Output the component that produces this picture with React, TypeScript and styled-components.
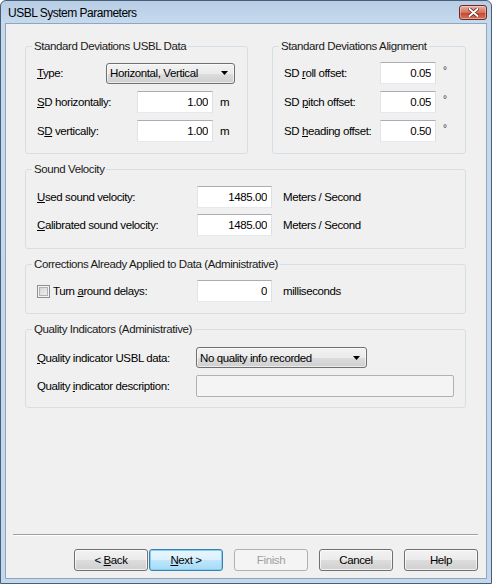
import React from "react";
import styled, { createGlobalStyle, css } from "styled-components";

const GlobalStyle = createGlobalStyle`
  html, body {
    margin: 0;
    padding: 0;
  }
  body {
    font-family: "Liberation Sans", Arial, sans-serif;
    font-size: 11.5px;
    letter-spacing: -0.4px;
    color: #000;
  }
  * {
    box-sizing: border-box;
  }
`;

const Window = styled.div`
  width: 492px;
  height: 584px;
  display: flex;
  flex-direction: column;
  padding: 0 4px 4px;
  border: 1px solid #4a5d72;
  border-radius: 6px 6px 0 0;
  background: linear-gradient(#b7cde6, #c6daee 22px, #c3d8ed);
`;

const TitleBar = styled.div`
  height: 22px;
  display: flex;
  align-items: flex-start;
  justify-content: space-between;
  padding-left: 3px;

  .caption {
    margin-top: 5px;
    font-size: 12px;
    letter-spacing: -0.5px;
    line-height: 14px;
  }
`;

const CloseBtn = styled.div`
  width: 28px;
  height: 15px;
  margin-top: 4px;
  display: flex;
  align-items: center;
  justify-content: center;
  border: 1px solid #6e2b22;
  border-radius: 3px;
  background: linear-gradient(#eab0a1, #d6715d 50%, #c4432c 51%, #d3775f);
  box-shadow: inset 0 0 0 1px rgba(255, 255, 255, 0.35);
`;

const Client = styled.div`
  flex: 1;
  display: flex;
  flex-direction: column;
  background: #f0f0f0;
  border: 1px solid #8fa6c0;
`;

const Content = styled.div`
  width: 441px;
  margin: 15px 0 0 19px;
  display: flex;
  flex-direction: column;
  gap: 8px;
`;

const TopRow = styled.div`
  display: grid;
  grid-template-columns: 223px 194px;
  justify-content: space-between;
`;

const GroupBox = styled.fieldset<{ $pt: number; $pb: number }>`
  margin: 0;
  min-width: 0;
  padding: ${(p) => p.$pt}px 8px ${(p) => p.$pb}px 11px;
  border: 1px solid #d5dfe5;
  border-radius: 3px;
  display: flex;
  flex-direction: column;

  > legend {
    margin-left: -5px;
    padding: 0 2px;
    line-height: 14px;
    color: #1a1a1a;
  }
`;

const Rows = styled.div<{ $gap: number }>`
  display: flex;
  flex-direction: column;
  gap: ${(p) => p.$gap}px;
`;

const Row = styled.div<{ $h?: number }>`
  height: ${(p) => p.$h ?? 22}px;
  display: flex;
  align-items: center;
`;

const Label = styled.span<{ $w: number }>`
  width: ${(p) => p.$w}px;
  flex-shrink: 0;
  display: flex;
  align-items: center;
  white-space: nowrap;
`;

const TextBox = styled.input<{ $w: number }>`
  width: ${(p) => p.$w}px;
  height: 22px;
  margin: 0;
  padding: 0 4px 0 3px;
  font: inherit;
  letter-spacing: inherit;
  color: #000;
  text-align: right;
  background: #fff;
  border: 1px solid;
  border-color: #abadb3 #dbdfe6 #e3e9ef #e2e3ea;
  outline: none;

  &:disabled {
    background: #f4f4f4;
    border-color: #adb2b5;
    border-radius: 2px;
  }
`;

const Unit = styled.span<{ $ml: number; $small?: boolean }>`
  margin-left: ${(p) => p.$ml}px;
  white-space: nowrap;
  ${(p) =>
    p.$small &&
    css`
      font-size: 10px;
      align-self: flex-start;
      margin-top: 3px;
      color: #333;
    `}
`;

const Combo = styled.div<{ $w: number; $h?: number }>`
  width: ${(p) => p.$w}px;
  height: ${(p) => p.$h ?? 21}px;
  display: flex;
  align-items: center;
  justify-content: space-between;
  padding: 0 6px 0 3px;
  border: 1px solid #707070;
  border-radius: 3px;
  background: linear-gradient(#f2f2f2, #ebebeb 50%, #dddddd 51%, #cfcfcf);
  box-shadow: inset 0 0 0 1px rgba(255, 255, 255, 0.6);
  white-space: nowrap;
`;

const CheckBox = styled.span`
  width: 13px;
  height: 13px;
  margin-right: 3px;
  border: 1px solid #8e8f8f;
  background: linear-gradient(135deg, #cfcfcf, #f6f6f6);
  box-shadow: inset 0 0 0 1px #f4f4f4, inset 0 0 0 2px #aeb3b9;
`;

const Spacer = styled.div`
  flex: 1;
`;

const Footer = styled.div`
  padding: 0 8px 7px 7px;
`;

const Separator = styled.div`
  height: 2px;
  border-top: 1px solid #a0a0a0;
  border-bottom: 1px solid #ffffff;
  margin-bottom: 13px;
`;

const ButtonRow = styled.div`
  display: flex;
  justify-content: flex-end;
`;

const Button = styled.div<{ $variant?: "default" | "disabled"; $ml: number }>`
  width: 74px;
  height: 22px;
  margin-left: ${(p) => p.$ml}px;
  display: flex;
  align-items: center;
  justify-content: center;
  border: 1px solid #707070;
  border-radius: 3px;
  background: linear-gradient(#f2f2f2, #ebebeb 50%, #dddddd 51%, #cfcfcf);
  box-shadow: inset 0 0 0 1px rgba(255, 255, 255, 0.7);
  color: #000;

  ${(p) =>
    p.$variant === "default" &&
    css`
      border-color: #3c7fb1;
      background: linear-gradient(#eaf6fd, #d9f0fc 50%, #bee6fd 51%, #a7d9f5);
      box-shadow: inset 0 0 0 1px #7fd0f5;
    `}

  ${(p) =>
    p.$variant === "disabled" &&
    css`
      border-color: #adb2b5;
      background: #f4f4f4;
      box-shadow: none;
      color: #a0a0a0;
    `}
`;

const Arrow = () => (
  <svg width="7" height="4" viewBox="0 0 7 4">
    <path d="M0 0 H7 L3.5 4 Z" fill="#000" />
  </svg>
);

const App = () => {
  return (
    <>
      <GlobalStyle />
      <Window>
        <TitleBar>
          <span className="caption">USBL System Parameters</span>
          <CloseBtn>
            <svg width="11" height="9" viewBox="0 0 11 9">
              <path d="M1.5 1 L9.5 8 M9.5 1 L1.5 8" stroke="#5a1d14" strokeWidth="3.4" strokeLinecap="round" />
              <path d="M1.5 1 L9.5 8 M9.5 1 L1.5 8" stroke="#ffffff" strokeWidth="2" strokeLinecap="round" />
            </svg>
          </CloseBtn>
        </TitleBar>
        <Client>
          <Content>
            <TopRow>
              <GroupBox $pt={9} $pb={11}>
                <legend>Standard Deviations USBL Data</legend>
                <Rows $gap={7}>
                  <Row>
                    <Label $w={69}>
                      <span>
                        <u>T</u>ype:
                      </span>
                    </Label>
                    <Combo $w={129}>
                      <span>Horizontal, Vertical</span>
                      <Arrow />
                    </Combo>
                  </Row>
                  <Row>
                    <Label $w={100}>
                      <span>
                        <u>S</u>D horizontally:
                      </span>
                    </Label>
                    <TextBox $w={76} value="1.00" readOnly />
                    <Unit $ml={7}>m</Unit>
                  </Row>
                  <Row>
                    <Label $w={100}>
                      <span>
                        S<u>D</u> vertically:
                      </span>
                    </Label>
                    <TextBox $w={76} value="1.00" readOnly />
                    <Unit $ml={7}>m</Unit>
                  </Row>
                </Rows>
              </GroupBox>
              <GroupBox $pt={9} $pb={11}>
                <legend>Standard Deviations Alignment</legend>
                <Rows $gap={7}>
                  <Row>
                    <Label $w={96}>
                      <span>
                        SD <u>r</u>oll offset:
                      </span>
                    </Label>
                    <TextBox $w={56} value="0.05" readOnly />
                    <Unit $ml={7} $small>
                      °
                    </Unit>
                  </Row>
                  <Row>
                    <Label $w={96}>
                      <span>
                        SD <u>p</u>itch offset:
                      </span>
                    </Label>
                    <TextBox $w={56} value="0.05" readOnly />
                    <Unit $ml={7} $small>
                      °
                    </Unit>
                  </Row>
                  <Row>
                    <Label $w={96}>
                      <span>
                        SD <u>h</u>eading offset:
                      </span>
                    </Label>
                    <TextBox $w={56} value="0.50" readOnly />
                    <Unit $ml={7} $small>
                      °
                    </Unit>
                  </Row>
                </Rows>
              </GroupBox>
            </TopRow>

            <GroupBox $pt={10} $pb={12}>
              <legend>Sound Velocity</legend>
              <Rows $gap={6}>
                <Row>
                  <Label $w={160}>
                    <span>
                      <u>U</u>sed sound velocity:
                    </span>
                  </Label>
                  <TextBox $w={75} value="1485.00" readOnly />
                  <Unit $ml={11}>Meters / Second</Unit>
                </Row>
                <Row>
                  <Label $w={160}>
                    <span>
                      <u>C</u>alibrated sound velocity:
                    </span>
                  </Label>
                  <TextBox $w={75} value="1485.00" readOnly />
                  <Unit $ml={11}>Meters / Second</Unit>
                </Row>
              </Rows>
            </GroupBox>

            <GroupBox $pt={9} $pb={11}>
              <legend>Corrections Already Applied to Data (Administrative)</legend>
              <Rows $gap={0}>
                <Row>
                  <Label $w={160}>
                    <CheckBox />
                    <span>
                      Turn <u>a</u>round delays:
                    </span>
                  </Label>
                  <TextBox $w={75} value="0" readOnly />
                  <Unit $ml={11}>milliseconds</Unit>
                </Row>
              </Rows>
            </GroupBox>

            <GroupBox $pt={11} $pb={10}>
              <legend>Quality Indicators (Administrative)</legend>
              <Rows $gap={7}>
                <Row $h={21}>
                  <Label $w={159}>
                    <span>
                      <u>Q</u>uality indicator USBL data:
                    </span>
                  </Label>
                  <Combo $w={171}>
                    <span>No quality info recorded</span>
                    <Arrow />
                  </Combo>
                </Row>
                <Row>
                  <Label $w={159}>
                    <span>
                      Quality <u>i</u>ndicator description:
                    </span>
                  </Label>
                  <TextBox $w={258} value="" disabled readOnly />
                </Row>
              </Rows>
            </GroupBox>
          </Content>

          <Spacer />

          <Footer>
            <Separator />
            <ButtonRow>
              <Button $ml={0}>
                <span>
                  &lt; <u>B</u>ack
                </span>
              </Button>
              <Button $ml={1} $variant="default">
                <span>
                  <u>N</u>ext &gt;
                </span>
              </Button>
              <Button $ml={11} $variant="disabled">
                Finish
              </Button>
              <Button $ml={11}>Cancel</Button>
              <Button $ml={11}>Help</Button>
            </ButtonRow>
          </Footer>
        </Client>
      </Window>
    </>
  );
};

export default App;
